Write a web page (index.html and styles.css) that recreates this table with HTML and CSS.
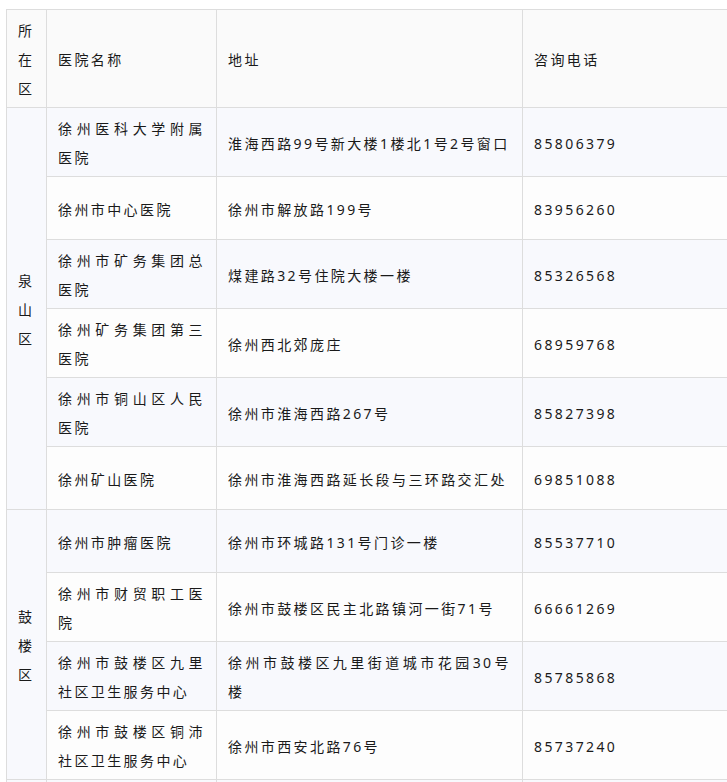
FILE: index.html
```html
<!DOCTYPE html>
<html lang="zh-CN">
<head>
<meta charset="utf-8">
<title>徐州市医院</title>
<link rel="stylesheet" href="styles.css">
</head>
<body>
<table class="hosp">
  <colgroup>
    <col class="c-area">
    <col class="c-name">
    <col class="c-addr">
    <col class="c-tel">
  </colgroup>
  <thead>
    <tr>
      <th>所在区</th>
      <th>医院名称</th>
      <th>地址</th>
      <th>咨询电话</th>
    </tr>
  </thead>
  <tbody>
    <tr>
      <td rowspan="6">泉山区</td>
      <td>徐州医科大学附属医院</td>
      <td>淮海西路99号新大楼1楼北1号2号窗口</td>
      <td>85806379</td>
    </tr>
    <tr class="single">
      <td>徐州市中心医院</td>
      <td>徐州市解放路199号</td>
      <td>83956260</td>
    </tr>
    <tr>
      <td>徐州市矿务集团总医院</td>
      <td>煤建路32号住院大楼一楼</td>
      <td>85326568</td>
    </tr>
    <tr>
      <td>徐州矿务集团第三医院</td>
      <td>徐州西北郊庞庄</td>
      <td>68959768</td>
    </tr>
    <tr>
      <td>徐州市铜山区人民医院</td>
      <td>徐州市淮海西路267号</td>
      <td>85827398</td>
    </tr>
    <tr class="single">
      <td>徐州矿山医院</td>
      <td>徐州市淮海西路延长段与三环路交汇处</td>
      <td>69851088</td>
    </tr>
    <tr class="single">
      <td rowspan="4">鼓楼区</td>
      <td>徐州市肿瘤医院</td>
      <td>徐州市环城路131号门诊一楼</td>
      <td>85537710</td>
    </tr>
    <tr>
      <td>徐州市财贸职工医院</td>
      <td>徐州市鼓楼区民主北路镇河一街71号</td>
      <td>66661269</td>
    </tr>
    <tr>
      <td>徐州市鼓楼区九里社区卫生服务中心</td>
      <td>徐州市鼓楼区九里街道城市花园30号楼</td>
      <td>85785868</td>
    </tr>
    <tr>
      <td>徐州市鼓楼区铜沛社区卫生服务中心</td>
      <td>徐州市西安北路76号</td>
      <td>85737240</td>
    </tr>
    <tr class="single">
      <td></td>
      <td></td>
      <td></td>
      <td></td>
    </tr>
  </tbody>
</table>
</body>
</html>
```

FILE: styles.css
```css
html, body {
  overflow: hidden;
}

body {
  margin: 9px 0 0 6px;
  background: #ffffff;
  color: #1a1a1a;
  font-family: "Noto Sans", "Noto Sans CJK SC", sans-serif;
  font-size: 14px;
}

.hosp {
  border-collapse: collapse;
  table-layout: fixed;
  width: 800px;
  letter-spacing: 2.4px;
  line-height: 29px;
}

.c-area { width: 40px; }
.c-name { width: 170px; }
.c-addr { width: 306px; }
.c-tel  { width: 284px; }

.hosp th,
.hosp td {
  border: 1px solid #dddddd;
  padding: 6px 11px 4px;
  text-align: justify;
  vertical-align: middle;
  font-weight: normal;
  word-break: break-all;
}

.hosp thead tr {
  background: #fafafa;
}

.hosp tbody tr:nth-child(odd) {
  background: #f8f9fd;
}

.hosp tbody tr:nth-child(even) {
  background: #fdfdfd;
}

.hosp tr.single {
  height: 63px;
}
```
